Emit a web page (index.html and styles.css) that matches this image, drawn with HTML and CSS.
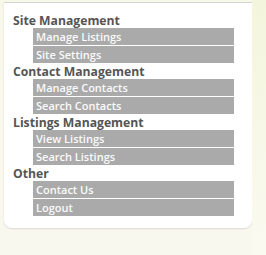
FILE: index.html
```html
<!DOCTYPE html>
<html>
<head>
<meta charset="utf-8">
<link rel="stylesheet" href="styles.css">
</head>
<body>
<div class="page">
  <div class="main">
    <div class="panel">
      <div class="section">
        <div class="heading">Site Management</div>
        <a class="item">Manage Listings</a>
        <a class="item">Site Settings</a>
      </div>
      <div class="section">
        <div class="heading">Contact Management</div>
        <a class="item">Manage Contacts</a>
        <a class="item">Search Contacts</a>
      </div>
      <div class="section">
        <div class="heading">Listings Management</div>
        <a class="item">View Listings</a>
        <a class="item">Search Listings</a>
      </div>
      <div class="section">
        <div class="heading">Other</div>
        <a class="item">Contact Us</a>
        <a class="item">Logout</a>
      </div>
    </div>
  </div>
  <div class="side"></div>
</div>
</body>
</html>
```
FILE: styles.css
```css
html, body {
  margin: 0;
  padding: 0;
}
body {
  background: #f9f8ef;
  font-family: "Open Sans", "DejaVu Sans", sans-serif;
  width: 266px;
  height: 255px;
  overflow: hidden;
}
.page {
  display: flex;
  height: 255px;
}
.main {
  width: 252px;
  padding-top: 2px;
  background: linear-gradient(#f8f8e9, #f9f8ef);
}
.panel {
  margin-left: 4px;
  background: #fff;
  border-top: 1px solid #d6d6d6;
  border-radius: 0 0 8px 8px;
  box-shadow: 0 1px 2px rgba(0,0,0,0.12);
  padding: 10px 18px 11px 9px;
}
.side {
  flex: 1;
  background: linear-gradient(#f3f5dc, #fafaf1);
}
.heading {
  font-weight: bold;
  font-size: 12.2px;
  line-height: 15px;
  color: #555;
}
.item {
  display: block;
  margin-left: 20px;
  margin-bottom: 1px;
  height: 17px;
  line-height: 17px;
  background: #aaaaaa;
  color: #fafafa;
  font-size: 11px;
  font-weight: 600;
  padding-left: 3px;
}
```
